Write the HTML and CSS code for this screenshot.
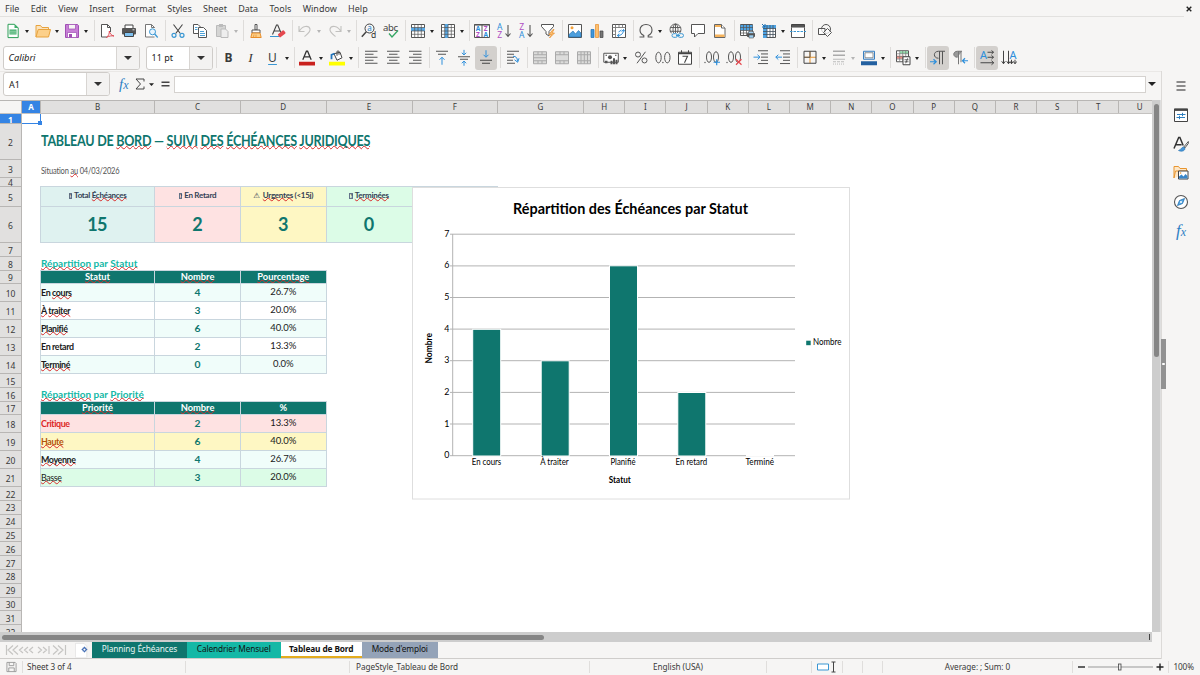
FILE: index.html
```
<!DOCTYPE html>
<html lang="fr">
<head>
  <meta charset="UTF-8" />
  <meta name="viewport" content="width=device-width, initial-scale=1.0"/>
  <title>Tableau de Bord</title>
  <link rel="stylesheet" href="styles.css">
</head>
<body>
  <!-- Icon set -->
  <svg class="sprite" xmlns="http://www.w3.org/2000/svg">
    <symbol id="new" viewBox="0 0 16 16"><path d="M3 1.3h6.5l3.700 3.700v9.600H3z" fill="#fff" stroke="#2e9e58"/><path d="M9.500 1v4h4z" fill="#3fae6a"/><path d="M4.500 6.500h7v5h-7z" fill="#3fae6a"/><path d="M5 8.200h6M5 10h6" stroke="#d9f0e1" stroke-width=".6"/></symbol>
    <symbol id="open" viewBox="0 0 16 16"><path d="M1 14V2.500h4.500l1.500 2h6.500V7" fill="#fbe3bd" stroke="#e8a33d"/><path d="M1 14L3.200 6.500H15.500L13.500 14z" fill="#fcd08a" stroke="#e8a33d"/></symbol>
    <symbol id="save" viewBox="0 0 16 16"><path d="M1.500 1.500h12l1 1v12h-13z" fill="#c77fd6" stroke="#a04fb4"/><path d="M4.500 1.500h7v4.500h-7z" fill="#f6f5f4" stroke="#a04fb4" stroke-width=".7"/><path d="M3.500 9.500h9v5h-9z" fill="#fff" stroke="#a04fb4" stroke-width=".7"/><path d="M5 11h3v3.500H5z" fill="#a04fb4"/></symbol>
    <symbol id="pdf" viewBox="0 0 16 16"><path d="M11.500 9V4.500L8.500 1.500H2.500v12.500H8" fill="#fff" stroke="#555"/><path d="M8.500 1.500v3h3" fill="none" stroke="#555"/><path d="M7.500 14.500c2-1.500 3-4 2.800-6.500 .5 2.500 2 4.500 4.700 5-2.500-.5-5 0-7.500 1.500z" fill="none" stroke="#dd3f4b" stroke-width=".9"/></symbol>
    <symbol id="print" viewBox="0 0 16 16"><path d="M4 5V2h8v3" fill="#fff" stroke="#444"/><rect x="1" y="5" width="14" height="6.500" rx="1" fill="#555"/><path d="M3.500 9.500h9v4h-9z" fill="#7ec0ef" stroke="#444"/><path d="M11.500 6.800h2" stroke="#fff" stroke-width=".8"/></symbol>
    <symbol id="preview" viewBox="0 0 16 16"><path d="M11.500 5V4.500L8.500 1.500H2.500v12.500H11.500" fill="#fff" stroke="#777"/><path d="M8.500 1.500v3h3" fill="none" stroke="#777"/><circle cx="9.500" cy="8.800" r="3" fill="#e8f4fd" stroke="#3a97d3"/><path d="M11.700 11l3 3.500" stroke="#3a97d3" stroke-width="1.300"/></symbol>
    <symbol id="cut" viewBox="0 0 16 16"><path d="M3.500 1.500l6.800 9M12.500 1.500l-6.800 9" stroke="#444" stroke-width="1.100"/><circle cx="4" cy="12.300" r="2" fill="none" stroke="#3a97d3" stroke-width="1.200"/><circle cx="12" cy="12.300" r="2" fill="none" stroke="#3a97d3" stroke-width="1.200"/></symbol>
    <symbol id="copy" viewBox="0 0 16 16"><path d="M1.500 1.500h4.500l2.500 2.500v6.500h-7z" fill="#fff" stroke="#555"/><path d="M6.500 4.500h5l3 3v7h-8z" fill="#fff" stroke="#555"/><path d="M3 4.500h2.500M3 6.500h2.500M8 8.500h4M8 10.500h5M8 12.500h5" stroke="#3a97d3" stroke-width=".9"/></symbol>
    <symbol id="paste" viewBox="0 0 16 16"><path d="M2.500 2.500h9v11h-9z" fill="#d5d5d4" stroke="#bbb"/><path d="M5 1h4v3H5z" fill="#bbb"/><path d="M7 6h4.500l2.500 2.500v6H7z" fill="#eee" stroke="#bbb"/></symbol>
    <symbol id="clone" viewBox="0 0 16 16"><path d="M7 1.500h2v5.500h-2z" fill="#fff" stroke="#555"/><path d="M4 7h8v3H4z" fill="#fff" stroke="#555"/><path d="M4 10l-1.200 4.500h10.400L12 10z" fill="#fcd08a" stroke="#e88d2a"/><path d="M5.500 14l.5-2.500M8 14v-2.500" stroke="#e88d2a" stroke-width=".7"/></symbol>
    <symbol id="clear" viewBox="0 0 16 16"><path d="M2.500 11.500L6.500 2h1.200l4 9.500M4 8h6" fill="none" stroke="#444" stroke-width="1.100"/><path d="M0 13.500h9" stroke="#3a97d3"/><rect x="8" y="9" width="7.500" height="4" rx="1" transform="rotate(-38 11.500 11)" fill="#e5484f"/></symbol>
    <symbol id="undo" viewBox="0 0 16 16"><path d="M2 3v5.500h5.500M2.300 8.300C5 2.500 12 2 13 6c.6 3-2.500 5-5.500 7.500" fill="none" stroke="#c2c1bf" stroke-width="1.100"/></symbol>
    <symbol id="redo" viewBox="0 0 16 16"><path d="M14 3v5.500H8.500M13.700 8.300C11 2.500 4 2 3 6c-.6 3 2.500 5 5.500 7.500" fill="none" stroke="#c2c1bf" stroke-width="1.100"/></symbol>
    <symbol id="find" viewBox="0 0 16 16"><circle cx="8.500" cy="5.500" r="4.500" fill="none" stroke="#444"/><path d="M5.300 8.800L.8 13.800" stroke="#444" stroke-width="1.500"/><text x="6.200" y="8" font-size="8" fill="#2383c9">a</text><text x="10" y="15" font-size="8.500" fill="#333">d</text></symbol>
    <symbol id="spell" viewBox="0 0 16 16"><text x="0" y="7.500" font-size="9.500" textLength="15" fill="#444">abc</text><path d="M6 10.500l3 3.500 6-6.500" fill="none" stroke="#35a764" stroke-width="1.300"/></symbol>
    <symbol id="row" viewBox="0 0 16 16"><path d="M1.500 1.500h13v13h-13z" fill="#fff" stroke="#555"/><path d="M1 4.500h14v3.500H1z" fill="#5aaae6"/><path d="M1.500 4.500h13M1.500 8h13M1.500 11.300h13M4.700 1.500v13M8 1.500v13M11.300 1.500v13" stroke="#555" stroke-width=".7"/></symbol>
    <symbol id="col" viewBox="0 0 16 16"><path d="M1.500 1.500h13v13h-13z" fill="#fff" stroke="#555"/><path d="M4.700 1h3.500v14H4.700z" fill="#5aaae6"/><path d="M1.500 4.500h13M1.500 8h13M1.500 11.300h13M4.700 1.500v13M8 1.500v13M11.300 1.500v13" stroke="#555" stroke-width=".7"/></symbol>
    <symbol id="sort" viewBox="0 0 16 16"><path d="M.5 1.500h15v13H.5zM8 1.500v13" fill="#fff" stroke="#555"/><path d="M.5 1.800h15" stroke="#555" stroke-width="1.500"/><g font-size="6.500" font-weight="bold"><text x="1.800" y="8" fill="#2e8fdb">A</text><text x="2" y="14" fill="#b04fc4">Z</text><text x="9.800" y="8" fill="#b04fc4">Z</text><text x="9.500" y="14" fill="#2e8fdb">A</text></g></symbol>
    <symbol id="az" viewBox="0 0 16 16"><text x="1" y="7.300" font-size="8.500" fill="#2e8fdb">A</text><text x="1.200" y="15" font-size="8.500" fill="#b04fc4">Z</text><path d="M12 2v11.500M9.500 10.500l2.500 3 2.500-3" fill="none" stroke="#555" stroke-width="1.100"/></symbol>
    <symbol id="za" viewBox="0 0 16 16"><text x="1.200" y="7.300" font-size="8.500" fill="#b04fc4">Z</text><text x="1" y="15" font-size="8.500" fill="#2e8fdb">A</text><path d="M12 2v11.500M9.500 10.500l2.500 3 2.500-3" fill="none" stroke="#555" stroke-width="1.100"/></symbol>
    <symbol id="filter" viewBox="0 0 16 16"><path d="M1.500 1.500h12v2l-4.500 5V13L6 11V8.500l-4.500-5z" fill="#fff" stroke="#555"/><path d="M13 6.500l-4 5h2.500L9.500 15l5-5h-2.500l2-3.500z" fill="#fbc072" stroke="#e88d2a" stroke-width=".7"/></symbol>
    <symbol id="image" viewBox="0 0 16 16"><path d="M1.500 1.500h13v13h-13z" fill="#fff" stroke="#555"/><path d="M2 14v-2.500L6 8l2.500 3 3-3.500L14 10v4z" fill="#4d9fdd" stroke="#1e6fb0" stroke-width=".6"/><circle cx="5" cy="4.800" r="1.500" fill="#f3a13b"/></symbol>
    <symbol id="chart" viewBox="0 0 16 16"><path d="M2 6.500h3v8H2z" fill="#3f97dc" stroke="#1e6fb0" stroke-width=".7"/><path d="M6.500 1.500h3v13h-3z" fill="#fbc072" stroke="#e88d2a" stroke-width=".7"/><path d="M11 8h3v6.500h-3z" fill="#777" stroke="#444" stroke-width=".7"/></symbol>
    <symbol id="pivot" viewBox="0 0 16 16"><path d="M1.500 1.500h13v13h-13z" fill="#fff" stroke="#555"/><path d="M1.500 4.500h13M4.500 1.500v13M8 1.500v3M11.500 1.500v3M1.500 8h3M1.500 11.500h3" stroke="#777" stroke-width=".9"/><path d="M12.500 6.500c0 4-2 6-6 6M10.700 8.500l1.800-2 1.500 2M8.300 10.700l-2 1.800 2 1.500M7.500 9l3-2" fill="none" stroke="#2e8fdb"/></symbol>
    <symbol id="omega" viewBox="0 0 16 16"><path d="M1.500 14h4.300v-1.500C3.300 11.300 2 9.400 2 7c0-3.300 2.500-5.500 6-5.500S14 3.700 14 7c0 2.400-1.300 4.300-3.800 5.500V14h4.300" fill="none" stroke="#555" stroke-width="1.100"/></symbol>
    <symbol id="link" viewBox="0 0 16 16"><g fill="none" stroke="#555" stroke-width=".9"><circle cx="7.500" cy="6.500" r="5.500"/><ellipse cx="7.500" cy="6.500" rx="2.500" ry="5.500"/><path d="M2.300 4.500h10.400M2 8.300h11M7.500 1v9"/></g><rect x="3.500" y="10" width="12.500" height="6" fill="#f6f5f4"/><rect x="4" y="10.700" width="5.500" height="3.600" rx="1.800" fill="none" stroke="#3a97d3"/><rect x="10" y="10.700" width="5.500" height="3.600" rx="1.800" fill="none" stroke="#3a97d3"/><path d="M8 12.500h4" stroke="#3a97d3"/></symbol>
    <symbol id="comment" viewBox="0 0 16 16"><path d="M1.500 1.500h13v9H8l-3.500 3.500v-3.500h-3z" fill="#fff" stroke="#555"/></symbol>
    <symbol id="header" viewBox="0 0 16 16"><path d="M2.500 1.500h7l3.500 3.500v9.500H2.500z" fill="#fff" stroke="#666"/><path d="M3 2h6v2H3zM3 11.500h9.500v2.500H3z" fill="#f6b35c"/><path d="M9.500 1.500v3.500h3.500" fill="#fff" stroke="#666"/></symbol>
    <symbol id="printarea" viewBox="0 0 16 16"><path d="M1.500 1.500h12v11h-12z" fill="#fff" stroke="#555"/><path d="M1.500 2h12v5.500h-12z" fill="#4da2e2"/><path d="M1 4.500h13M1 7.500h13M1 10h13M4.500 1v12M7.500 1v12M10.500 1v12" stroke="#555" stroke-width=".7"/><rect x="8" y="10" width="8" height="4" rx=".8" fill="#555"/><path d="M9.500 8.500h5v2h-5zM10 12h4.500v3H10z" fill="#9fd0f3" stroke="#555" stroke-width=".6"/></symbol>
    <symbol id="freeze" viewBox="0 0 16 16"><path d="M2.500 2.500h12v12h-12z" fill="#fff" stroke="#555"/><path d="M2 2h13v3.500H6V15H2z" fill="#4da2e2"/><path d="M2 5.500h13M2 8.500h13M2 11.500h13M6 2v13M9 2v13M12 2v13" stroke="#44525e" stroke-width=".8"/><path d="M1 1l3 3M4 1v3H1" stroke="#1e6fb0" fill="none"/></symbol>
    <symbol id="split" viewBox="0 0 16 16"><path d="M1.500 1.500h13v3h-13z" fill="#555" stroke="#444"/><path d="M1.500 4.500v10h13v-10" fill="#fff" stroke="#555"/><path d="M0 8.500h16" stroke="#3a97d3" stroke-dasharray="2.500 1"/></symbol>
    <symbol id="shapes" viewBox="0 0 16 16"><circle cx="9" cy="6" r="4.500" fill="none" stroke="#555"/><path d="M1.500 5.500h6.500v6H1.500z" fill="#fff" fill-opacity=".7" stroke="#555"/><path d="M10.500 5.500l4 4-4 4-4-4z" fill="#fff" fill-opacity=".7" stroke="#555"/></symbol>

    <symbol id="fontcolor" viewBox="0 0 16 16"><path d="M3.800 10L7.400 1.500h1.200l3.600 8.500M5 7.200h6" fill="none" stroke="#333" stroke-width="1.300"/><path d="M0 12h16v3.800H0z" fill="#c9211e"/></symbol>
    <symbol id="fillcolor" viewBox="0 0 16 16"><path d="M5 4l6-1.500 2 5.500-5 2.500z" fill="#fff" stroke="#444"/><path d="M8 6V2c0-1.200 2-1.200 2 0v3" fill="none" stroke="#444"/><path d="M2.500 9.500V5l3-1.200" fill="none" stroke="#2475bb" stroke-width="1.800"/><path d="M0 12h16v3.800H0z" fill="#ffff00"/></symbol>
    <symbol id="left" viewBox="0 0 16 16"><path d="M2 1.500h12.500M2 4.500h8.500M2 7.500h12.500M2 10.500h8.500M2 13.500h12.500" stroke="#555"/></symbol>
    <symbol id="center" viewBox="0 0 16 16"><path d="M2 1.500h12.500M4 4.500h8.500M2 7.500h12.500M4 10.500h8.500M2 13.500h12.500" stroke="#555"/></symbol>
    <symbol id="right" viewBox="0 0 16 16"><path d="M2 1.500h12.500M6 4.500h8.500M2 7.500h12.500M6 10.500h8.500M2 13.500h12.500" stroke="#555"/></symbol>
    <symbol id="top" viewBox="0 0 16 16"><path d="M2 1.500h12M4 4.500h8" stroke="#555"/><path d="M8 15V7.500M5.500 10L8 7.500 10.500 10" fill="none" stroke="#2e8fdb"/></symbol>
    <symbol id="middle" viewBox="0 0 16 16"><path d="M2 7h12M4 9.500h8" stroke="#555"/><path d="M8 0v5M5.800 3L8 5.200 10.200 3M8 16v-4.500M5.800 13.500L8 11.300l2.200 2.200" fill="none" stroke="#2e8fdb"/></symbol>
    <symbol id="bottom" viewBox="0 0 16 16"><path d="M2 10.500h12M4 13.500h8" stroke="#444"/><path d="M8 .5V7M5.500 5L8 7.500 10.500 5" fill="none" stroke="#2e8fdb"/></symbol>
    <symbol id="wrap" viewBox="0 0 16 16"><path d="M2 1.500h12M2 4.500h7M2 7.500h7M2 10.500h6M2 13.500h8" stroke="#555"/><path d="M8 6.500c3 0 4.500 1.500 4.500 5M9.500 10l3.200 2.500 1.300-4" fill="none" stroke="#2e8fdb"/></symbol>
    <symbol id="merge" viewBox="0 0 16 16"><path d="M1.500 2h13v12h-13z" fill="#dcdcdb" stroke="#aaa"/><path d="M1.500 5h13M1.500 8h13M1.500 11h13M6 2v3M10 2v3M6 11v3M10 11v3" stroke="#aaa"/></symbol>
    <symbol id="merge2" viewBox="0 0 16 16"><path d="M1.500 2h13v12h-13z" fill="#dcdcdb" stroke="#aaa"/><path d="M1.500 5h13M1.500 11h13M6 2v3M10 2v3M6 11v3M10 11v3" stroke="#aaa"/></symbol>
    <symbol id="merge3" viewBox="0 0 16 16"><path d="M1.500 2h13v12h-13z" fill="#dcdcdb" stroke="#aaa"/><path d="M1.500 5h13M1.500 11h13M5 2v12M8.300 2v12M11.500 2v12" stroke="#aaa"/></symbol>
    <symbol id="currency" viewBox="0 0 16 16"><path d="M.8 3.500h14.500v9H.8z" fill="#fff" stroke="#444" stroke-width=".9"/><circle cx="7" cy="7.500" r="2" fill="#555"/><path d="M2 11h2.500v2.500H2zM7.500 11h2v3.500h-2zM10 8.500h2v6h-2zM12.500 10h2v4.500h-2z" fill="#555"/><path d="M2.500 5.500h1.500M12 5.500h1.500" stroke="#444"/></symbol>
    <symbol id="percent" viewBox="0 0 16 16"><g fill="none" stroke="#555"><circle cx="5" cy="4.800" r="2.500"/><circle cx="11.500" cy="10.700" r="2.500"/><path d="M12.500 2L4 13.500"/></g></symbol>
    <symbol id="number" viewBox="0 0 16 16"><g fill="none" stroke="#555"><ellipse cx="3.500" cy="7.800" rx="2.700" ry="5.300"/><ellipse cx="12.300" cy="7.800" rx="2.700" ry="5.300"/></g><circle cx="7.900" cy="12.800" r=".7" fill="#555"/></symbol>
    <symbol id="date" viewBox="0 0 16 16"><path d="M1.500 2.500h13v12h-13z" fill="#fff" stroke="#444"/><path d="M1.500 3.800h13" stroke="#444" stroke-width="1.500"/><path d="M4.500.5v2.500M11.500.5v2.500" stroke="#444"/><path d="M5.500 6.500h5l-3 6.500" fill="none" stroke="#444" stroke-width="1.100"/></symbol>
    <symbol id="adddec" viewBox="0 0 16 16"><circle cx="1" cy="12.800" r=".7" fill="#555"/><g fill="none" stroke="#555"><ellipse cx="5" cy="7.300" rx="2.500" ry="5.300"/><ellipse cx="12" cy="7.300" rx="2.500" ry="5.300"/></g><path d="M9.500 12.500h6.500M12.700 9.500v6" stroke="#2e8fdb" stroke-width="1.200"/></symbol>
    <symbol id="deldec" viewBox="0 0 16 16"><circle cx="1" cy="12.800" r=".7" fill="#555"/><g fill="none" stroke="#555"><ellipse cx="5" cy="7.300" rx="2.500" ry="5.300"/><ellipse cx="12" cy="7.300" rx="2.500" ry="5.300"/></g><path d="M10 9.500l5.500 5.500M15.500 9.500L10 15" stroke="#e5484f" stroke-width="1.200"/></symbol>
    <symbol id="indent" viewBox="0 0 16 16"><path d="M5 1h10M8 4.200h7M8 7.400h7M8 10.600h7M5 13.800h10" stroke="#555"/><path d="M.5 7.400H7M4.500 5L7 7.400 4.500 9.800" fill="none" stroke="#2e8fdb"/></symbol>
    <symbol id="outdent" viewBox="0 0 16 16"><path d="M5 1h10M8 4.200h7M8 7.400h7M8 10.600h7M5 13.800h10" stroke="#555"/><path d="M7 7.400H.8M3.300 5L.8 7.400l2.500 2.400" fill="none" stroke="#2e8fdb"/></symbol>
    <symbol id="borders" viewBox="0 0 16 16"><path d="M8 1.500v12M2 7.500h12" stroke="#e8952f"/><path d="M2 1.500h12v12H2z" fill="none" stroke="#444"/><path d="M8 1.500v6M2 7.500h6" stroke="#555"/></symbol>
    <symbol id="lines" viewBox="0 0 16 16"><path d="M2 1.500h12M2 5.500h12" stroke="#aaa" stroke-width="1.500"/><path d="M2 9.500h12" stroke="#bbb"/><path d="M2 12h12" stroke="#bbb" stroke-dasharray="3 1"/><path d="M2 14.300h12" stroke="#bbb" stroke-dasharray="1 1"/></symbol>
    <symbol id="bordercolor" viewBox="0 0 16 16"><path d="M2.500 1.500h11v8h-11z" fill="#dfeefb" stroke="#3a7fc0"/><path d="M4 3h8v5H4z" fill="#fff" stroke="#555" stroke-width=".6"/><path d="M0 11.500h16v4H0z" fill="#2360a0"/></symbol>
    <symbol id="cond" viewBox="0 0 16 16"><path d="M1.500 1h12v11h-12z" fill="#fff" stroke="#555"/><path d="M5 1.500h8v2.500H5z" fill="#8edba8"/><path d="M2 6h7v3H2z" fill="#ef8f86"/><path d="M1.500 4h12M1.500 6.700h12M1.500 9.300h12M4.700 1v11M7.700 1v11M10.700 1v11" stroke="#777" stroke-width=".7"/><path d="M8 7h7v8H8z" fill="#fff" stroke="#444"/><path d="M9.500 10h4M9.500 12h4M12.700 8.500l-2 5" stroke="#444" stroke-width=".8"/></symbol>
    <symbol id="ltr" viewBox="0 0 16 16"><path d="M15 1.500H8.500c-5.500 0-5.500 7 0 7M9.500 1.500v13M12.500 1.500v13" fill="none" stroke="#555"/><path d="M0 12h6M3.500 9.500L6.200 12l-2.700 2.500" fill="none" stroke="#2e8fdb" stroke-width="1.200"/></symbol>
    <symbol id="rtl" viewBox="0 0 16 16"><path d="M10 1.500H5.500c-5 0-5 6 0 6" fill="#999" stroke="#777"/><path d="M6.500 1.500v13M9 1.500v11" stroke="#777"/><path d="M16 11h-5M13 8.500L10.500 11l2.500 2.500" fill="none" stroke="#2e8fdb" stroke-width="1.200"/></symbol>
    <symbol id="horiz" viewBox="0 0 16 16"><text x="1" y="9.500" font-size="11" fill="#2e8fdb">A</text><path d="M8.500 2.500h6M8.500 7.500h6M1.500 13h13M12.500.7l2 1.800-2 1.800M12.500 5.700l2 1.800-2 1.800M12.500 11l2.300 2-2.300 2" fill="none" stroke="#444"/></symbol>
    <symbol id="vert" viewBox="0 0 16 16"><text x="8.500" y="9.500" font-size="11" fill="#2e8fdb">A</text><path d="M2.500 1v13M7.500 1v13M10.500 10v4M14 10v4M.7 11.500l1.800 2.500 1.800-2.500M5.700 11.500L7.500 14l1.500-2M9 11.700l1.500 2.300 1.700-2.300L14 14l1.800-2.300" fill="none" stroke="#444"/></symbol>

    <symbol id="s-props" viewBox="0 0 16 16"><path d="M1.500 2h13v12.500h-13z" fill="#fff" stroke="#444"/><path d="M1 2.800h14" stroke="#444" stroke-width="2.200"/><path d="M4 7.500h8.500M3.500 10.500h8.500M9.500 5.800v3.400M6.500 8.800v3.400" stroke="#2e7fbf"/></symbol>
    <symbol id="s-styles" viewBox="0 0 16 16"><path d="M1 12.500L5.700 1.500h1.200l3.300 8M2.600 8.800h6" fill="none" stroke="#333" stroke-width="1.500"/><path d="M15.300 5.500l-4.500 5.500 1 1 3.500-4.500z" fill="#fff" stroke="#555"/><path d="M10.500 11c-2 0-2.500 3-5 3.500 3 1.500 6.500.5 6.500-2.200z" fill="#4a97d8" stroke="#1e6fb0" stroke-width=".6"/></symbol>
    <symbol id="s-gallery" viewBox="0 0 16 16"><path d="M1 13V1.500h4.500L7 3.500h6.500V6M1 13l1.500-7h12V8" fill="#fde7c8" stroke="#e8952f"/><path d="M5.500 6h9.500v8H5.500z" fill="#fff" stroke="#444"/><path d="M6 13.500v-2l2.500-2 2 2 2-2.500 2 2v2.500z" fill="#3a86c8"/><circle cx="7.600" cy="8" r=".8" fill="#e8952f"/></symbol>
    <symbol id="s-nav" viewBox="0 0 16 16"><circle cx="8" cy="8" r="6.500" fill="#fff" stroke="#555" stroke-width="1.100"/><path d="M11.500 4.500l-5 2-2 5 5-2z" fill="#5aaae6" stroke="#1e6fb0" stroke-width=".8"/><circle cx="8" cy="8" r="1" fill="#fff"/></symbol>
    <symbol id="new-sheet" viewBox="0 0 18 16"><path d="M.5 1h9l3 3v12h-12z" fill="#fff" stroke="#ddd" stroke-width=".7"/><circle cx="10" cy="7.500" r="1.800" fill="none" stroke="#3a66b0" stroke-width="1.200"/><path d="M10 4.500v1.500M10 9v1.500M7 7.500h1.500M11.500 7.500H13" stroke="#3a66b0"/></symbol>
  </svg>

  <div class="menubar">
    <span>File</span><span>Edit</span><span>View</span><span>Insert</span><span>Format</span><span>Styles</span><span>Sheet</span><span>Data</span><span>Tools</span><span>Window</span><span>Help</span>
    <svg class="close" viewBox="0 0 6 6"><path d="M.7.7l4.600 4.600M5.300.7L.7 5.300" stroke="#222" stroke-width="1.400"/></svg>
  </div>

  <div class="toolbar">
    <svg class="icon"><use href="#new"/></svg><i class="drop"></i>
    <svg class="icon"><use href="#open"/></svg><i class="drop"></i>
    <svg class="icon"><use href="#save"/></svg><i class="drop"></i>
    <i class="sep"></i>
    <svg class="icon"><use href="#pdf"/></svg>
    <svg class="icon"><use href="#print"/></svg>
    <svg class="icon"><use href="#preview"/></svg>
    <i class="sep"></i>
    <svg class="icon"><use href="#cut"/></svg>
    <svg class="icon"><use href="#copy"/></svg>
    <svg class="icon"><use href="#paste"/></svg><i class="drop off"></i>
    <i class="sep"></i>
    <svg class="icon"><use href="#clone"/></svg>
    <svg class="icon"><use href="#clear"/></svg>
    <i class="sep"></i>
    <svg class="icon"><use href="#undo"/></svg><i class="drop off"></i>
    <svg class="icon"><use href="#redo"/></svg><i class="drop off"></i>
    <i class="sep"></i>
    <svg class="icon"><use href="#find"/></svg>
    <svg class="icon"><use href="#spell"/></svg>
    <i class="sep"></i>
    <svg class="icon"><use href="#row"/></svg><i class="drop"></i>
    <svg class="icon"><use href="#col"/></svg><i class="drop"></i>
    <i class="sep"></i>
    <svg class="icon"><use href="#sort"/></svg>
    <svg class="icon"><use href="#az"/></svg>
    <svg class="icon"><use href="#za"/></svg>
    <svg class="icon"><use href="#filter"/></svg>
    <i class="sep"></i>
    <svg class="icon"><use href="#image"/></svg>
    <svg class="icon"><use href="#chart"/></svg>
    <svg class="icon"><use href="#pivot"/></svg>
    <i class="sep"></i>
    <svg class="icon"><use href="#omega"/></svg><i class="drop"></i>
    <svg class="icon"><use href="#link"/></svg>
    <svg class="icon"><use href="#comment"/></svg>
    <svg class="icon"><use href="#header"/></svg>
    <i class="sep"></i>
    <svg class="icon"><use href="#printarea"/></svg>
    <svg class="icon"><use href="#freeze"/></svg><i class="drop"></i>
    <svg class="icon"><use href="#split"/></svg>
    <i class="sep"></i>
    <svg class="icon"><use href="#shapes"/></svg>
  </div>

  <div class="toolbar format">
    <div class="combo font-name"><em>Calibri</em><b></b></div>
    <div class="combo font-size"><span>11 pt</span><b></b></div>
    <i class="sep"></i>
    <span class="letter bold">B</span>
    <span class="letter italic">I</span>
    <span class="letter under">U</span><i class="drop"></i>
    <i class="sep"></i>
    <svg class="icon"><use href="#fontcolor"/></svg><i class="drop"></i>
    <svg class="icon"><use href="#fillcolor"/></svg><i class="drop"></i>
    <i class="sep"></i>
    <svg class="icon"><use href="#left"/></svg>
    <svg class="icon"><use href="#center"/></svg>
    <svg class="icon"><use href="#right"/></svg>
    <i class="sep"></i>
    <svg class="icon"><use href="#top"/></svg>
    <svg class="icon"><use href="#middle"/></svg>
    <svg class="icon on"><use href="#bottom"/></svg>
    <i class="sep"></i>
    <svg class="icon"><use href="#wrap"/></svg>
    <i class="sep"></i>
    <svg class="icon"><use href="#merge"/></svg>
    <svg class="icon"><use href="#merge2"/></svg>
    <svg class="icon"><use href="#merge3"/></svg>
    <i class="sep"></i>
    <svg class="icon"><use href="#currency"/></svg><i class="drop"></i>
    <svg class="icon"><use href="#percent"/></svg>
    <svg class="icon"><use href="#number"/></svg>
    <svg class="icon"><use href="#date"/></svg>
    <i class="sep"></i>
    <svg class="icon"><use href="#adddec"/></svg>
    <svg class="icon"><use href="#deldec"/></svg>
    <i class="sep"></i>
    <svg class="icon"><use href="#indent"/></svg>
    <svg class="icon"><use href="#outdent"/></svg>
    <i class="sep"></i>
    <svg class="icon"><use href="#borders"/></svg><i class="drop"></i>
    <svg class="icon"><use href="#lines"/></svg><i class="drop off"></i>
    <svg class="icon"><use href="#bordercolor"/></svg><i class="drop"></i>
    <i class="sep"></i>
    <svg class="icon"><use href="#cond"/></svg><i class="drop"></i>
    <i class="sep"></i>
    <svg class="icon on"><use href="#ltr"/></svg>
    <svg class="icon"><use href="#rtl"/></svg>
    <i class="sep"></i>
    <svg class="icon on"><use href="#horiz"/></svg>
    <svg class="icon"><use href="#vert"/></svg>
  </div>

  <div class="main">
    <div class="work">
      <div class="formula">
        <div class="combo name-box"><span>A1</span><b></b></div>
        <span class="fx">f<small>x</small></span>
        <svg class="sum" viewBox="0 0 30 12"><path d="M9 3.500V1H1l4.500 5L1 11h8V8.500" fill="none" stroke="#444"/><path d="M14 5.300h5l-2.500 2.700z" fill="#222"/></svg>
        <svg class="equals" viewBox="0 0 9 8"><path d="M.5 2.300h8M.5 5.800h8" stroke="#444" stroke-width="1.400"/></svg>
        <div class="input"></div>
        <i class="drop big"></i>
      </div>

      <div class="sheet-area">
        <div class="col-heads">
          <span></span><span class="sel">A</span><span>B</span><span>C</span><span>D</span><span>E</span><span>F</span><span>G</span><span>H</span><span>I</span><span>J</span><span>K</span><span>L</span><span>M</span><span>N</span><span>O</span><span>P</span><span>Q</span><span>R</span><span>S</span><span>T</span><span>U</span>
        </div>
        <div class="vscroll"><div class="thumb"></div></div>

        <div class="sheet">
          <div class="row-heads">
            <span class="sel">1</span><span>2</span><span>3</span><span>4</span><span>5</span><span>6</span><span>7</span><span>8</span><span>9</span><span>10</span><span>11</span><span>12</span><span>13</span><span>14</span><span>15</span><span>16</span><span>17</span><span>18</span><span>19</span><span>20</span><span>21</span><span>22</span><span>23</span><span>24</span><span>25</span><span>26</span><span>27</span><span>28</span><span>29</span><span>30</span><span>31</span><span>32</span>
          </div>

          <div class="cells">
            <div class="cursor"></div>
            <div class="title">TABLEAU DE <u>BORD</u> — <u>SUIVI</u> <u>DES</u> <u>ÉCHÉANCES</u> <u>JURIDIQUES</u></div>
            <div class="subtitle">Situation <u>au</u> 04/03/2026</div>

            <!-- KPI cards -->
            <div class="kpis">
              <div class="label teal"><i class="tofu">?</i>Total <u>Échéances</u></div>
              <div class="label red"><i class="tofu">?</i>En Retard</div>
              <div class="label yellow"><i class="warn">⚠</i><u>Urgentes</u> (&lt;15j)</div>
              <div class="label green"><i class="tofu">?</i><u>Terminées</u></div>
              <div class="label blank"></div>
              <div class="value teal">15</div>
              <div class="value red">2</div>
              <div class="value yellow">3</div>
              <div class="value green">0</div>
            </div>

            <!-- By status -->
            <div class="section statut"><u>Répartition</u> par <u>Statut</u></div>
            <div class="table t1">
              <div class="th"><u>Statut</u></div><div class="th"><u>Nombre</u></div><div class="th"><u>Pourcentage</u></div>
              <div class="name mint">En <u>cours</u></div><div class="num mint">4</div><div class="pct mint">26.7%</div>
              <div class="name"><u>À</u> <u>traiter</u></div><div class="num">3</div><div class="pct">20.0%</div>
              <div class="name mint"><u>Planifié</u></div><div class="num mint">6</div><div class="pct mint">40.0%</div>
              <div class="name">En retard</div><div class="num">2</div><div class="pct">13.3%</div>
              <div class="name mint"><u>Terminé</u></div><div class="num mint">0</div><div class="pct mint">0.0%</div>
            </div>

            <!-- By priority -->
            <div class="section priorite"><u>Répartition</u> par <u>Priorité</u></div>
            <div class="table t2">
              <div class="th"><u>Priorité</u></div><div class="th"><u>Nombre</u></div><div class="th">%</div>
              <div class="name red crit">Critique</div><div class="num red">2</div><div class="pct red">13.3%</div>
              <div class="name yellow high"><u>Haute</u></div><div class="num yellow">6</div><div class="pct yellow">40.0%</div>
              <div class="name mint"><u>Moyenne</u></div><div class="num mint">4</div><div class="pct mint">26.7%</div>
              <div class="name green low"><u>Basse</u></div><div class="num green">3</div><div class="pct green">20.0%</div>
            </div>

            <!-- Chart floats over the cells -->
            <svg class="bar-chart" viewBox="0 0 438 313">
              <rect x=".5" y=".5" width="437" height="311.500" fill="#fff" stroke="#dedede"/>
              <text x="218.500" y="27" class="chart-title" textLength="235" lengthAdjust="spacingAndGlyphs">Répartition des Échéances par Statut</text>
              <path class="grid" d="M38 47.200H383M38 78.900H383M38 110.500H383M38 142.100H383M38 173.700H383M38 205.400H383M38 237H383M38 268.700H383M40.700 47V269"/>
              <g class="bars">
                <rect x="60.700" y="142.300" width="28" height="126.700"/>
                <rect x="129.200" y="173.800" width="28" height="95.200"/>
                <rect x="197.500" y="78.800" width="28" height="190.200"/>
                <rect x="265.800" y="205.500" width="28" height="63.500"/>
              </g>
              <path d="M334 268.700h28" stroke="#fff" stroke-width="1.500"/>
              <g class="axis end">
                <text x="37.500" y="49.500">7</text><text x="37.500" y="81.200">6</text><text x="37.500" y="112.800">5</text><text x="37.500" y="144.500">4</text><text x="37.500" y="176.100">3</text><text x="37.500" y="207.800">2</text><text x="37.500" y="239.500">1</text><text x="37.500" y="271">0</text>
              </g>
              <g class="axis mid">
                <text x="74.500" y="278" textLength="29.500" lengthAdjust="spacingAndGlyphs">En cours</text>
                <text x="142.500" y="278" textLength="28.500" lengthAdjust="spacingAndGlyphs">À traiter</text>
                <text x="211" y="278" textLength="25" lengthAdjust="spacingAndGlyphs">Planifié</text>
                <text x="279.300" y="278" textLength="31.500" lengthAdjust="spacingAndGlyphs">En retard</text>
                <text x="347.800" y="278" textLength="28.500" lengthAdjust="spacingAndGlyphs">Terminé</text>
              </g>
              <text class="axis-title" x="207.800" y="295.700" textLength="22" lengthAdjust="spacingAndGlyphs">Statut</text>
              <text class="axis-title" transform="translate(20 176.500) rotate(-90)" textLength="30.500" lengthAdjust="spacingAndGlyphs">Nombre</text>
              <path d="M394.200 153.700h4.500v4.500h-4.500z" fill="#0f766e"/>
              <text class="axis" x="401" y="158" textLength="28.500" lengthAdjust="spacingAndGlyphs">Nombre</text>
            </svg>
          </div>
        </div>
      </div>

      <div class="hscroll"><div class="thumb"></div></div>

      <div class="tabs">
        <svg class="tab-nav" viewBox="0 0 62 12"><path d="M1.500 1v10M8 1.500L3 6l5 4.500M13 1.500L8 6l5 4.500M18 3l-3.500 3L18 9M23 3l-3.500 3L23 9M28 3l-3.500 3L28 9M33 3l3.500 3L33 9M38 3l3.500 3L38 9M44 2v8M48 1.500l5 4.500-5 4.500M53 1.500l5 4.500-5 4.500M60.500 1v10" fill="none" stroke="#c6c5c3" stroke-width="1.200"/></svg>
        <svg class="add" viewBox="0 0 18 16"><use href="#new-sheet"/></svg>
        <span class="tab planning">Planning Échéances</span>
        <span class="tab calendrier">Calendrier Mensuel</span>
        <span class="tab bord">Tableau de Bord</span>
        <span class="tab mode">Mode d'emploi</span>
      </div>
    </div>

    <div class="sidebar">
      <svg viewBox="0 0 16 16"><path d="M3.500 4h9M3.500 8h9M3.500 12h9" stroke="#222" stroke-width="1.200"/></svg>
      <svg><use href="#s-props"/></svg>
      <svg><use href="#s-styles"/></svg>
      <svg><use href="#s-gallery"/></svg>
      <svg><use href="#s-nav"/></svg>
      <span class="fx">f<small>x</small></span>
      <div class="handle"></div>
    </div>
  </div>

  <div class="status">
    <span class="doc"><svg viewBox="0 0 12 12"><path d="M1 1h9l1 1v9H1zM3.500 1v3.500h5V1M3 11V7h6v4" fill="none" stroke="#999"/></svg></span>
    <span class="pos">Sheet 3 of 4</span>
    <span class="blank"></span>
    <span class="style">PageStyle_Tableau de Bord</span>
    <span class="lang">English (USA)</span>
    <span class="ins"></span>
    <span class="mode"><svg viewBox="0 0 20 12"><path d="M.5 3h11v6h-11z" fill="#fff" stroke="#3a97d3"/><path d="M14.500 1h4M14.500 11h4M16.500 1v10" stroke="#444"/></svg></span>
    <span class="cell"></span>
    <span class="cell"></span>
    <span class="calc">Average: ; Sum: 0</span>
    <span class="zoom"><svg viewBox="0 0 88 10"><path d="M1 5h7" stroke="#222" stroke-width="1.400"/><path d="M11 5h65" stroke="#999"/><rect x="41.500" y="2" width="2.500" height="6" fill="#eee" stroke="#444" stroke-width=".8"/><path d="M79.500 5h7M83 1.500v7" stroke="#222" stroke-width="1.400"/></svg></span>
    <span class="pctz">100%</span>
  </div>
</body>
</html>
```
FILE: styles.css
```
* {
  box-sizing: border-box;
}

body {
  margin: 0;
  width: 1200px;
  height: 675px;
  overflow: hidden;
  display: flex;
  flex-direction: column;
  background: #f6f5f4;
  color: #3a3a3a;
  font-family: "Noto Sans", sans-serif;
  font-size: 9px;
}

.sprite {
  display: none;
}

/* --- Menu and toolbars --- */

.menubar {
  height: 17px;
  display: flex;
  align-items: center;
  padding-left: 5px;
  gap: 11.300px;
  background: linear-gradient(to right, #e2e1df 1184px, transparent 1184px) bottom / 100% 1px no-repeat;
}

.close {
  width: 6px;
  height: 6px;
  margin: 0 8px 0 auto;
}

.toolbar {
  height: 27px;
  display: flex;
  align-items: center;
  padding-left: 2px;
}

.toolbar.format {
  padding-left: 2.500px;
}

.icon {
  width: 22px;
  height: 24px;
  padding: 4px 3px;
  flex: none;
}

.format .icon {
  padding-top: 3.500px;
}

.icon.on {
  background: #d3d0cd;
  border-radius: 3px;
}

.drop {
  width: 7.5px;
  height: 8px;
  flex: none;
  display: flex;
  align-items: center;
}

.drop::after {
  content: "";
  border: 2.5px solid transparent;
  border-top: 3px solid #222;
  border-bottom: 0;
  margin: 2px 0 0 1px;
}

.drop.off::after {
  border-top-color: #b5b5b5;
}

.drop.big {
  width: 15px;
  justify-content: center;
}

.drop.big::after {
  border-width: 4px 4px 0;
  margin: 0 0 0 -3px;
}

.sep {
  width: 5px;
  height: 21px;
  flex: none;
  background: linear-gradient(#dedcda, #dedcda) 3px 0 / 1px 100% no-repeat;
}

.combo {
  height: 24px;
  display: flex;
  border: 1px solid #cfccc9;
  border-radius: 3px;
  background: #fff;
  overflow: hidden;
  color: #222;
}

.combo em,
.combo span {
  flex: 1;
  padding-left: 5px;
  align-self: center;
}

.combo b {
  width: 23px;
  background: #f3f2f1;
  border-left: 1px solid #d8d5d2;
  display: flex;
  align-items: center;
  justify-content: center;
}

.combo b::after {
  content: "";
  border: 4px solid transparent;
  border-top-color: #333;
  border-bottom: 0;
}

.font-name {
  width: 137px;
  font-size: 9.3px;
}

.font-size {
  width: 67px;
  margin-left: 6px;
}

.letter {
  width: 22px;
  text-align: center;
  flex: none;
  font-size: 12px;
  line-height: 23px;
}

.bold {
  font-weight: bold;
}

.italic {
  font-family: "Liberation Serif", serif;
  font-style: italic;
  font-size: 13.5px;
}

.under {
  text-decoration: underline #3a97d3;
  text-underline-offset: 2px;
}

/* --- Formula bar --- */

.main {
  height: 588px;
  flex: none;
  display: flex;
}

.work {
  width: 1161px;
  flex: none;
}

.formula {
  height: 29px;
  padding: 0 0 4px 3px;
  display: flex;
  align-items: center;
  border-top: 1px solid #eae8e6;
}

.name-box {
  width: 107px;
  margin-right: 9px;
}

.fx {
  font-family: "Liberation Serif", serif;
  font-style: italic;
  font-size: 15px;
  line-height: 16px;
  color: #2e7fc4;
}

.fx small {
  font-size: 12px;
}

.sum {
  width: 30px;
  height: 12px;
  margin-left: 6px;
}

.equals {
  width: 9px;
  height: 8px;
  margin: 0 4px 0 -4px;
}

.input {
  flex: 1;
  height: 17px;
  background: #fff;
  border: 1px solid #d5d2cf;
}

/* --- Sheet --- */

.sheet-area {
  height: 532px;
  display: grid;
  grid-template-columns: 1152px 9px;
  grid-template-rows: 14px 518px;
}

.col-heads {
  display: grid;
  grid-template-columns: 22px 19px 114px 86px 85.5px 86px 85.5px 86px repeat(13, 41.2px) 32.400px;
  overflow: hidden;
  border-top: 1px solid #b8b6b4;
  border-bottom: 1px solid #c4c2c0;
  background: #e1e0df;
}

.col-heads span {
  border-right: 1px solid #b8b6b4;
  text-align: center;
  font-size: 8px;
  line-height: 12.500px;
}

.col-heads span:first-child {
  background: #f6f5f4;
}

.col-heads span:last-child {
  padding-left: 8px;
  border-right: 0;
}

.col-heads .sel,
.row-heads .sel {
  background: #3584e4;
  color: #fff;
  font-weight: bold;
}

.vscroll {
  grid-row: 1 / 3;
  grid-column: 2;
  background: #cdcdcd;
  padding: 4px 1.500px 0 2px;
  border-right: 1px solid #dedede;
}

.vscroll .thumb {
  height: 253px;
  border-radius: 3px;
  background: #858585;
}

.sheet {
  display: flex;
  background: #fff;
  overflow: hidden;
}

.row-heads,
.cells {
  display: grid;
  grid-template-rows: 10px 36px 18px 9px 20px 36px 14px 14px 13px 18px 18px 18px 18px 18px 14px 14px 13px 18px 18px 18px 18px 14px repeat(10, 13.800px);
}

.row-heads {
  width: 22px;
  background: #e1e0df;
}

.row-heads span {
  display: flex;
  align-items: center;
  justify-content: center;
  border-right: 1px solid #b8b6b4;
  border-bottom: 1px solid #b8b6b4;
  padding-top: 1px;
  font-size: 8.500px;
  line-height: 9px;
  overflow: hidden;
}

.cells {
  position: relative;
  flex: 1;
  grid-template-columns: 19px 114px 86px 85.5px 86px 85.5px 1fr;
  font-family: Lato, sans-serif;
  color: #1a1a1a;
}

.cells u {
  text-decoration: underline wavy #d92b2b 0.5px;
  text-underline-offset: -0.5px;
  text-decoration-skip-ink: none;
}

.cursor {
  grid-area: 1 / 1;
  position: relative;
  border: 1px solid #3584e4;
  border-width: 0 1px 1px 0;
}

.cursor::after {
  content: "";
  position: absolute;
  right: -2px;
  bottom: -2px;
  width: 4px;
  height: 4px;
  background: #3584e4;
}

/* Calibri is narrower than Lato */
.title,
.subtitle {
  transform-origin: left;
  white-space: nowrap;
}

.title {
  grid-area: 2 / 2 / 3 / 8;
  font-size: 14.500px;
  font-weight: bold;
  line-height: 33px;
  letter-spacing: -0.3px;
  color: #0f766e;
  transform: scaleX(0.866);
}

.subtitle {
  grid-area: 3 / 2 / 4 / 8;
  font-size: 8.500px;
  line-height: 23px;
  letter-spacing: -0.2px;
  color: #555;
  transform: scaleX(0.88);
}

.kpis,
.table {
  display: grid;
  grid-template-columns: subgrid;
  grid-template-rows: subgrid;
}

.kpis > div,
.table > div {
  border: 1px solid #c9d6de;
  margin: -1px 0 0 -1px;
  text-align: center;
  overflow: hidden;
  white-space: nowrap;
}

.kpis {
  grid-area: 5 / 2 / 7 / 7;
}

.kpis .blank {
  border-width: 1px 0 0;
}

.label {
  font-size: 8px;
  font-weight: bold;
  line-height: 17px;
  letter-spacing: -0.28px;
  color: #334155;
}

.value {
  font-size: 18px;
  font-weight: bold;
  line-height: 34px;
  letter-spacing: -0.8px;
  padding-right: 1px;
  color: #0f766e;
}

/* Missing emoji box */
.tofu {
  display: inline-block;
  width: 3.500px;
  height: 6px;
  margin-right: 2px;
  border: 0.5px solid #64748b;
  font-size: 5px;
  font-style: normal;
  line-height: 5px;
  letter-spacing: 0;
}

.warn {
  font-family: "DejaVu Sans", sans-serif;
  font-style: normal;
  font-weight: normal;
  font-size: 7.500px;
  margin-right: 3px;
}

.teal { background: #dff2f0; }
.red { background: #fee2e2; }
.yellow { background: #fef7c3; }
.green { background: #dcfce7; }
.mint { background: #f0fdfa; }

.section {
  font-size: 10px;
  font-weight: bold;
  line-height: 13.500px;
  color: #14b8a6;
}

.statut {
  grid-area: 8 / 2 / 9 / 5;
}

.priorite {
  grid-area: 16 / 2 / 17 / 5;
}

.t1 {
  grid-area: 9 / 2 / 15 / 5;
}

.t2 {
  grid-area: 17 / 2 / 22 / 5;
}

.table .th {
  background: #0f766e;
  color: #fff;
  font-size: 9.300px;
  font-weight: bold;
  line-height: 11.500px;
}

.table .name {
  text-align: left;
  font-size: 8.900px;
  font-weight: bold;
  line-height: 17px;
  letter-spacing: -0.38px;
}

.table .num {
  font-size: 10.300px;
  font-weight: bold;
  line-height: 16px;
  color: #0f766e;
}

.table .pct {
  font-size: 9.500px;
  line-height: 16px;
  letter-spacing: -0.1px;
}

.table .crit {
  color: #dc2626;
}

.table .high {
  color: #b45309;
}

.table .low {
  font-weight: normal;
}

/* --- Chart --- */

.bar-chart {
  position: absolute;
  left: 390px;
  top: 73px;
  width: 438px;
  height: 313px;
}

.chart-title {
  font-size: 15.500px;
  font-weight: bold;
  text-anchor: middle;
}

.grid {
  fill: none;
  stroke: #b3b3b3;
}

.bars {
  fill: #0f766e;
  stroke: #fff;
}

.axis {
  font-size: 8.900px;
}

.end {
  text-anchor: end;
}

.mid {
  text-anchor: middle;
}

.axis-title {
  font-size: 8.500px;
  font-weight: bold;
}

text.axis-title[x] {
  text-anchor: middle;
}

/* --- Bottom bars --- */

.hscroll {
  height: 10px;
  width: 1152px;
  padding: 2.500px 2px;
  background: linear-gradient(#444, #444) 1149px 2px / 1px 6px no-repeat #cdcdcd;
}

.hscroll .thumb {
  width: 542px;
  height: 5.500px;
  border-radius: 3px;
  background: #858585;
}

.tabs {
  height: 17px;
  display: flex;
  align-items: flex-start;
  border-bottom: 1px solid #cfcdcb;
}

.tab-nav {
  width: 62px;
  height: 12px;
  margin: 2px 8px 0 5px;
}

.add {
  width: 17px;
  height: 16px;
}

.tab {
  height: 16px;
  line-height: 14.500px;
  font-size: 8.300px;
  letter-spacing: -0.12px;
  text-align: center;
  white-space: nowrap;
  color: #111;
}

.planning {
  width: 95px;
  background: #0f766e;
  color: #e8f5f3;
}

.calendrier {
  width: 93.500px;
  background: #14b8a6;
}

.bord {
  width: 81.500px;
  background: #fff;
  border-bottom: 2px solid #e3ac1f;
  font-weight: bold;
}

.tab.mode {
  width: 75.500px;
  background: #94a3b8;
}

.sidebar {
  position: relative;
  width: 39px;
  border-left: 1px solid #dcdad8;
  display: flex;
  flex-direction: column;
  align-items: center;
  gap: 13.100px;
  padding-top: 6.500px;
}

.sidebar svg {
  width: 16px;
  height: 16px;
}

.sidebar .fx {
  font-size: 17px;
}

.handle {
  position: absolute;
  left: -1px;
  top: 268px;
  width: 5px;
  height: 50px;
  background: radial-gradient(circle at center, #fff 1px, transparent 1.500px) #929292;
}

.status {
  height: 16px;
  flex: none;
  display: flex;
  align-items: center;
  font-size: 8.200px;
  letter-spacing: -0.06px;
  white-space: nowrap;
}

.status span {
  height: 12px;
  line-height: 12px;
  text-align: center;
  border-right: 1px solid #e0dedc;
}

.status svg {
  display: block;
  margin: auto;
}

.doc { width: 23px; }
.doc svg { width: 11px; height: 12px; }
.status .pos { width: 163px; text-align: left; padding-left: 4px; }
.status .blank { width: 164px; }
.status .style { width: 240px; text-align: left; padding-left: 6px; }
.lang { width: 177px; }
.ins { width: 45px; }
.status .mode { width: 31px; }
.status .mode svg { width: 20px; height: 12px; }
.cell { width: 20px; }
.calc { width: 190px; }
.zoom { width: 96px; }
.zoom svg { width: 88px; height: 10px; margin-top: 1px; }
.status .pctz { flex: 1; padding-right: 6px; border: 0; text-align: right; }
```
